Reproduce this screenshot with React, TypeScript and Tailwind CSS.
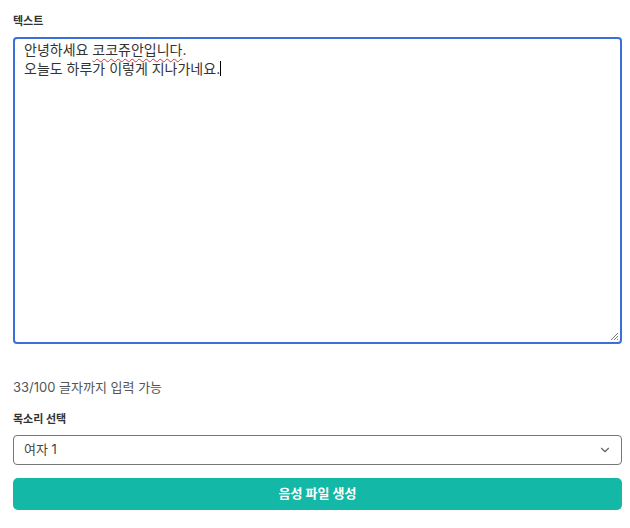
import { ChevronDown } from 'lucide-react'

const font = { fontFamily: '"Inter", "Noto Sans CJK KR", sans-serif' }

export default function App() {
  return (
    <div className="w-[630px] h-[528px] bg-white pl-[13px] pr-[8px] pt-[14px] text-[#333]" style={font}>
      <label className="block text-[11px] font-bold leading-[14px] text-[#333]">텍스트</label>
      <div className="relative mt-[9px] h-[307px] rounded-[4px] border-2 border-[#3a6fdc] px-[9px] pt-[1px] text-[14px] leading-[19px] text-[#333]">
        <div>
          안녕하세요{' '}
          <span className="underline decoration-wavy decoration-[#e03030] decoration-1 underline-offset-[3px]">코코쥬안입니다</span>.
        </div>
        <div>
          오늘도 하루가 이렇게 지나가네요.
          <span className="inline-block w-px h-[15px] bg-black align-[-2px]" />
        </div>
        <svg className="absolute right-[1px] bottom-[1px]" width="9" height="9" viewBox="0 0 9 9">
          <path d="M8 1L1 8M8 4L4 8M8 7L7 8" stroke="#777" strokeWidth="1" />
        </svg>
      </div>
      <p className="mt-[34px] text-[13px] leading-[18px] text-[#555]">33/100 글자까지 입력 가능</p>
      <label className="mt-[16px] block text-[11px] font-bold leading-[14px] text-[#333]">목소리 선택</label>
      <div className="mt-[9px] flex h-[30px] items-center justify-between rounded-[4px] border border-[#767676] pl-[10px] pr-[9px] text-[13px] text-[#444]">
        <span>여자 1</span>
        <ChevronDown size={14} strokeWidth={2} className="text-[#666]" />
      </div>
      <button className="mt-[13px] flex h-[32px] w-full items-center justify-center rounded-[5px] bg-[#14b8a6] text-[13px] font-bold text-white">
        음성 파일 생성
      </button>
    </div>
  )
}
